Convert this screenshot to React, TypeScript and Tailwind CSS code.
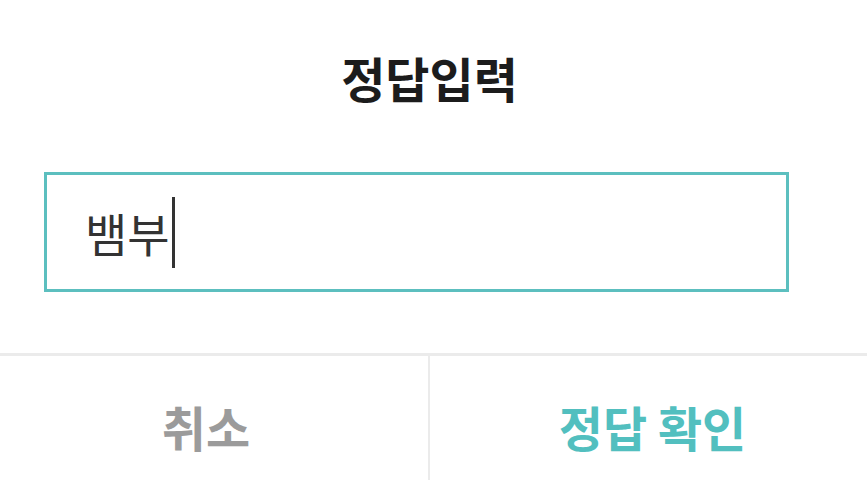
const FONT = { fontFamily: '"Noto Sans CJK KR", "Noto Sans", sans-serif' };

export default function App() {
  return (
    <div className="w-[867px] h-[480px] bg-white flex flex-col overflow-hidden" style={FONT}>
      {/* Title */}
      <div className="pt-[53px] pr-[8px] text-center text-[48px] leading-none font-bold text-[#1c1c1c]">
        정답입력
      </div>

      {/* Answer input */}
      <div className="mt-[71px] ml-[44px] w-[745px] h-[120px] border-[3px] border-[#5cbfbf] flex items-center pl-[38px]">
        <span className="text-[46px] leading-none text-[#333333]">뱀부</span>
        <span className="ml-[2px] w-[3px] h-[71px] bg-[#333333]" />
      </div>

      {/* Actions */}
      <div className="mt-[61px] border-t-[3px] border-[#ebebeb] flex flex-1">
        <button className="w-[428px] pt-[16px] pr-[16px] text-[48px] leading-none font-bold text-[#9b9b9b] flex items-center justify-center">
          취소
        </button>
        <div className="w-[2px] bg-[#ebebeb]" />
        <button className="flex-1 pt-[16px] pl-[8px] text-[48px] leading-none font-bold text-[#52bfbf] flex items-center justify-center">
          정답 확인
        </button>
      </div>
    </div>
  );
}
